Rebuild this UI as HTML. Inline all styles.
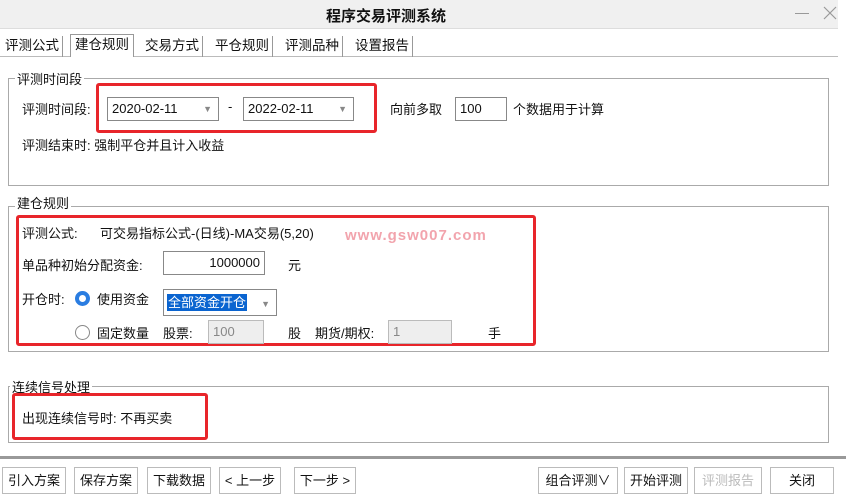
<!DOCTYPE html>
<html><head><meta charset="utf-8"><style>
*{box-sizing:border-box;margin:0;padding:0}
body{width:846px;height:500px;background:#fff;font-family:"Liberation Sans","Noto Sans CJK SC",sans-serif;font-size:13px;color:#111;position:relative;overflow:hidden}
.a{position:absolute;white-space:nowrap}
.title{left:0;top:0;width:838px;height:29px;background:#f0f0f0;border-bottom:1px solid #ddd}
.tab{top:36px;height:21px;line-height:20px;padding:0 3px;border-right:1px solid #999;font-size:13.5px}
.grp{border:1px solid #aaa}
.gt{background:#fff;padding:0 2px;font-size:13px}
.red{border:3px solid #e8252a;border-radius:3px}
.inp{border:1px solid #888;background:#fff;height:24px;line-height:22px;padding:0 4px;font-size:13px}
.btn{top:467px;height:27px;line-height:25px;border:1px solid #bbb;background:#fff;text-align:center;font-size:13px}
.rad{width:15px;height:15px;border-radius:50%;border:1px solid #666;background:#fff}
</style></head><body>
<div class="a title"></div>
<div class="a" style="left:326px;top:5px;font-weight:bold;font-size:15px">程序交易评测系统</div>
<div class="a" style="left:795px;top:13px;width:14px;height:1px;background:#999"></div>
<svg class="a" style="left:823px;top:6px" width="14" height="14"><path d="M1 1L13 13M13 1L1 13" stroke="#999" stroke-width="1.2"/></svg>
<div class="a" style="left:0;top:56px;width:838px;height:1px;background:#bbb"></div>
<div class="a tab" style="left:2px">评测公式</div>
<div class="a tab" style="left:70px;top:34px;height:23px;background:#fff;border-left:1px solid #999;border-top:1px solid #999;padding:0 4px">建仓规则</div>
<div class="a tab" style="left:142px">交易方式</div>
<div class="a tab" style="left:212px">平仓规则</div>
<div class="a tab" style="left:282px">评测品种</div>
<div class="a tab" style="left:352px">设置报告</div>

<div class="a grp" style="left:8px;top:78px;width:821px;height:108px"></div>
<div class="a gt" style="left:15px;top:69px">评测时间段</div>
<div class="a" style="left:22px;top:99px">评测时间段:</div>
<div class="a inp" style="left:107px;top:97px;width:112px">2020-02-11<span style="position:absolute;right:6px;color:#888;font-size:9px">▼</span></div>
<div class="a" style="left:228px;top:99px">-</div>
<div class="a inp" style="left:243px;top:97px;width:111px">2022-02-11<span style="position:absolute;right:6px;color:#888;font-size:9px">▼</span></div>
<div class="a red" style="left:96px;top:83px;width:281px;height:50px"></div>
<div class="a" style="left:390px;top:99px">向前多取</div>
<div class="a inp" style="left:455px;top:97px;width:52px">100</div>
<div class="a" style="left:513px;top:99px">个数据用于计算</div>
<div class="a" style="left:22px;top:135px">评测结束时: 强制平仓并且计入收益</div>

<div class="a grp" style="left:8px;top:206px;width:821px;height:146px"></div>
<div class="a gt" style="left:15px;top:193px">建仓规则</div>
<div class="a red" style="left:16px;top:215px;width:520px;height:131px"></div>
<div class="a" style="left:22px;top:223px">评测公式:</div>
<div class="a" style="left:100px;top:223px">可交易指标公式-(日线)-MA交易(5,20)</div>
<div class="a" style="left:345px;top:227px;color:#f2a4ad;font-size:15px;letter-spacing:1px;font-weight:bold">www.gsw007.com</div>
<div class="a" style="left:22px;top:255px">单品种初始分配资金:</div>
<div class="a inp" style="left:163px;top:251px;width:102px;text-align:right">1000000</div>
<div class="a" style="left:288px;top:255px">元</div>
<div class="a" style="left:22px;top:289px">开仓时:</div>
<div class="a rad" style="left:75px;top:291px;border:4px solid #2a7de1"></div>
<div class="a" style="left:97px;top:289px">使用资金</div>
<div class="a inp" style="left:163px;top:289px;width:114px;height:27px;padding:2px 3px"><span style="background:#0a64d0;color:#fff;padding:1px 1px">全部资金开仓</span><span style="position:absolute;right:6px;top:3px;color:#888;font-size:9px">▼</span></div>
<div class="a rad" style="left:75px;top:325px;border-color:#888"></div>
<div class="a" style="left:97px;top:323px">固定数量</div>
<div class="a" style="left:163px;top:323px">股票:</div>
<div class="a inp" style="left:208px;top:320px;width:56px;background:#eee;border-color:#bbb;color:#888">100</div>
<div class="a" style="left:288px;top:323px">股</div>
<div class="a" style="left:315px;top:323px">期货/期权:</div>
<div class="a inp" style="left:388px;top:320px;width:64px;background:#eee;border-color:#bbb;color:#888">1</div>
<div class="a" style="left:488px;top:323px">手</div>

<div class="a grp" style="left:8px;top:386px;width:821px;height:57px"></div>
<div class="a gt" style="left:10px;top:377px">连续信号处理</div>
<div class="a red" style="left:12px;top:393px;width:196px;height:47px"></div>
<div class="a" style="left:22px;top:408px">出现连续信号时: 不再买卖</div>

<div class="a" style="left:0;top:456px;width:846px;height:3px;background:#999"></div>
<div class="a btn" style="left:2px;width:64px">引入方案</div>
<div class="a btn" style="left:74px;width:64px">保存方案</div>
<div class="a btn" style="left:147px;width:64px">下载数据</div>
<div class="a btn" style="left:219px;width:62px">&lt; 上一步</div>
<div class="a btn" style="left:294px;width:62px">下一步 &gt;</div>
<div class="a btn" style="left:538px;width:80px">组合评测∨</div>
<div class="a btn" style="left:624px;width:64px">开始评测</div>
<div class="a btn" style="left:694px;width:68px;color:#bbb">评测报告</div>
<div class="a btn" style="left:770px;width:64px">关闭</div>
</body></html>
